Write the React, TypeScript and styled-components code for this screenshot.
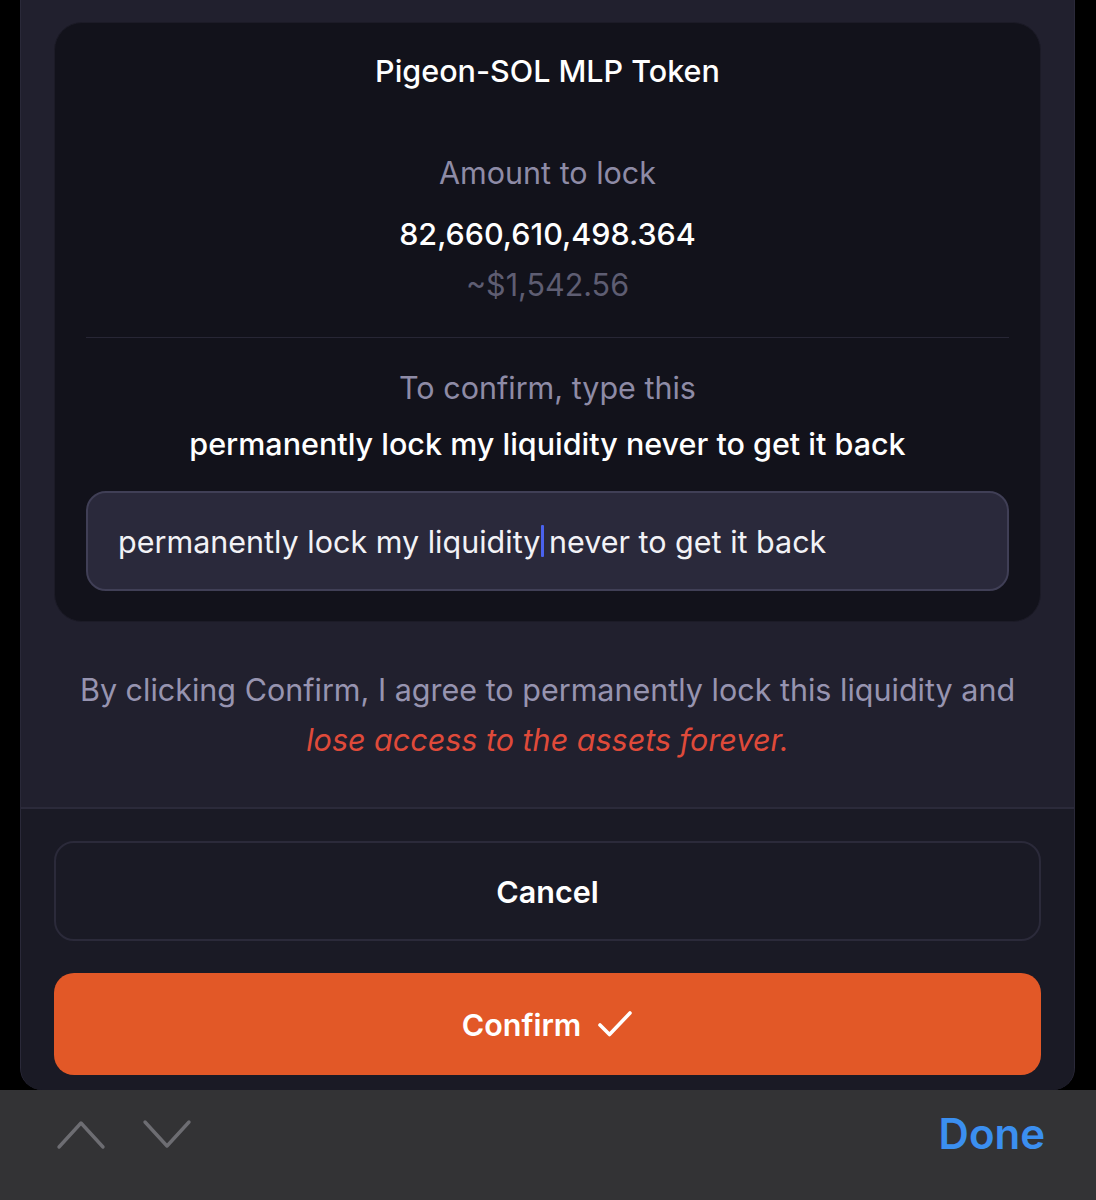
import React from 'react';
import styled, { createGlobalStyle } from 'styled-components';

const GlobalStyle = createGlobalStyle`
  html, body {
    margin: 0;
    padding: 0;
    background: #000;
    height: 1200px;
    overflow: hidden;
  }
  body {
    font-family: 'Inter', 'Liberation Sans', sans-serif;
    -webkit-font-smoothing: antialiased;
  }
`;

const confirmPhrase = 'permanently lock my liquidity never to get it back';

const App: React.FC = () => {
  const typedBefore = 'permanently lock my liquidity';
  const typedAfter = ' never to get it back';

  return (
    <Screen>
      <GlobalStyle />
      <Sheet>
        <Body>
          <Card>
            <TokenName>Pigeon-SOL MLP Token</TokenName>
            <Label $top={62}>Amount to lock</Label>
            <Amount>82,660,610,498.364</Amount>
            <UsdValue>~$1,542.56</UsdValue>
            <Divider />
            <Label $top={30}>To confirm, type this</Label>
            <Phrase>{confirmPhrase}</Phrase>
            <FakeInput>
              <span>{typedBefore}</span>
              <Caret />
              <span>{typedAfter}</span>
            </FakeInput>
          </Card>
          <Disclaimer>
            By clicking Confirm, I agree to permanently lock this liquidity and
            <br />
            <Warning>lose access to the assets forever.</Warning>
          </Disclaimer>
        </Body>
        <Footer>
          <CancelButton>Cancel</CancelButton>
          <ConfirmButton>
            Confirm
            <svg width="36" height="30" viewBox="0 0 36 30" fill="none">
              <path
                d="M3 16 L12.5 25.5 L33 4"
                stroke="#fff"
                strokeWidth="3.6"
                strokeLinecap="round"
                strokeLinejoin="round"
              />
            </svg>
          </ConfirmButton>
        </Footer>
      </Sheet>
      <KeyboardBar>
        <Arrows>
          <svg width="50" height="32" viewBox="0 0 50 32" fill="none">
            <path d="M3 29 L25 5 L47 29" stroke="#6d6d72" strokeWidth="3.4" strokeLinecap="round" strokeLinejoin="round" />
          </svg>
          <svg width="50" height="32" viewBox="0 0 50 32" fill="none">
            <path d="M3 4 L25 28 L47 4" stroke="#6d6d72" strokeWidth="3.4" strokeLinecap="round" strokeLinejoin="round" />
          </svg>
        </Arrows>
        <DoneButton>Done</DoneButton>
      </KeyboardBar>
    </Screen>
  );
};

const Screen = styled.div`
  width: 1096px;
  height: 1200px;
  display: flex;
  flex-direction: column;
  background: #000;
`;

const Sheet = styled.div`
  margin: 0 21px 0 20px;
  height: 1090px;
  display: flex;
  flex-direction: column;
  background: #21202e;
  border-left: 1px solid #2a2939;
  border-right: 1px solid #2a2939;
  border-radius: 0 0 22px 22px;
  overflow: hidden;
  box-sizing: border-box;
`;

const Body = styled.div`
  padding: 22px 33px 0 33px;
  display: flex;
  flex-direction: column;
`;

const Card = styled.div`
  background: #12121b;
  border: 1px solid #1c1b27;
  border-radius: 28px;
  padding: 28px 31px 30px;
  display: flex;
  flex-direction: column;
  align-items: center;
`;

const TokenName = styled.div`
  font-size: 30.5px;
  line-height: 40px;
  font-weight: 500;
  color: #ffffff;
`;

const Label = styled.div<{ $top: number }>`
  margin-top: ${p => p.$top}px;
  font-size: 30.5px;
  line-height: 40px;
  color: #8e8ba6;
`;

const Amount = styled.div`
  margin-top: 21px;
  font-size: 30.5px;
  line-height: 40px;
  font-weight: 500;
  color: #ffffff;
`;

const UsdValue = styled.div`
  margin-top: 11px;
  font-size: 30.5px;
  line-height: 40px;
  color: #5e5d72;
`;

const Divider = styled.div`
  align-self: stretch;
  margin-top: 32px;
  height: 1px;
  background: #272635;
`;

const Phrase = styled.div`
  margin-top: 16px;
  font-size: 30.5px;
  line-height: 40px;
  font-weight: 500;
  color: #ffffff;
`;

const FakeInput = styled.div`
  align-self: stretch;
  margin-top: 27px;
  height: 100px;
  box-sizing: border-box;
  display: flex;
  align-items: center;
  padding: 0 30px;
  background: #2a293b;
  border: 2px solid #403f56;
  border-radius: 20px;
  font-size: 30.5px;
  color: #f2f2f6;
  white-space: pre;
`;

const Caret = styled.span`
  display: inline-block;
  width: 3px;
  height: 32px;
  margin-left: 1px;
  margin-right: -4px;
  background: #4a62ee;
  border-radius: 1px;
`;

const Disclaimer = styled.p`
  margin: 43px 0 0;
  padding-bottom: 42px;
  text-align: center;
  font-size: 30.5px;
  line-height: 50px;
  color: #9794b0;
`;

const Warning = styled.span`
  color: #df4a3a;
  font-style: italic;
`;

const Footer = styled.div`
  flex: 1;
  background: #1a1a25;
  border-top: 2px solid #2b2a3a;
  padding: 32px 33px 0;
  display: flex;
  flex-direction: column;
  gap: 32px;
`;

const BaseButton = styled.button`
  font-family: 'Inter', 'Liberation Sans', sans-serif;
  font-size: 30.5px;
  font-weight: 600;
  color: #fff;
  border-radius: 20px;
  display: flex;
  align-items: center;
  justify-content: center;
  gap: 16px;
  cursor: pointer;
`;

const CancelButton = styled(BaseButton)`
  height: 100px;
  background: #1a1a25;
  border: 2px solid #2b2a3a;
`;

const ConfirmButton = styled(BaseButton)`
  height: 102px;
  background: #e25827;
  border: none;
`;

const KeyboardBar = styled.div`
  flex: 1;
  background: #333335;
  display: flex;
  align-items: flex-start;
  justify-content: space-between;
  padding: 27px 51px 0 56px;
`;

const Arrows = styled.div`
  display: flex;
  gap: 36px;
  padding-top: 1px;
`;

const DoneButton = styled.span`
  font-family: 'Inter', 'Liberation Sans', sans-serif;
  font-size: 42px;
  line-height: 34px;
  font-weight: 600;
  color: #3b8ff0;
`;

export default App;
